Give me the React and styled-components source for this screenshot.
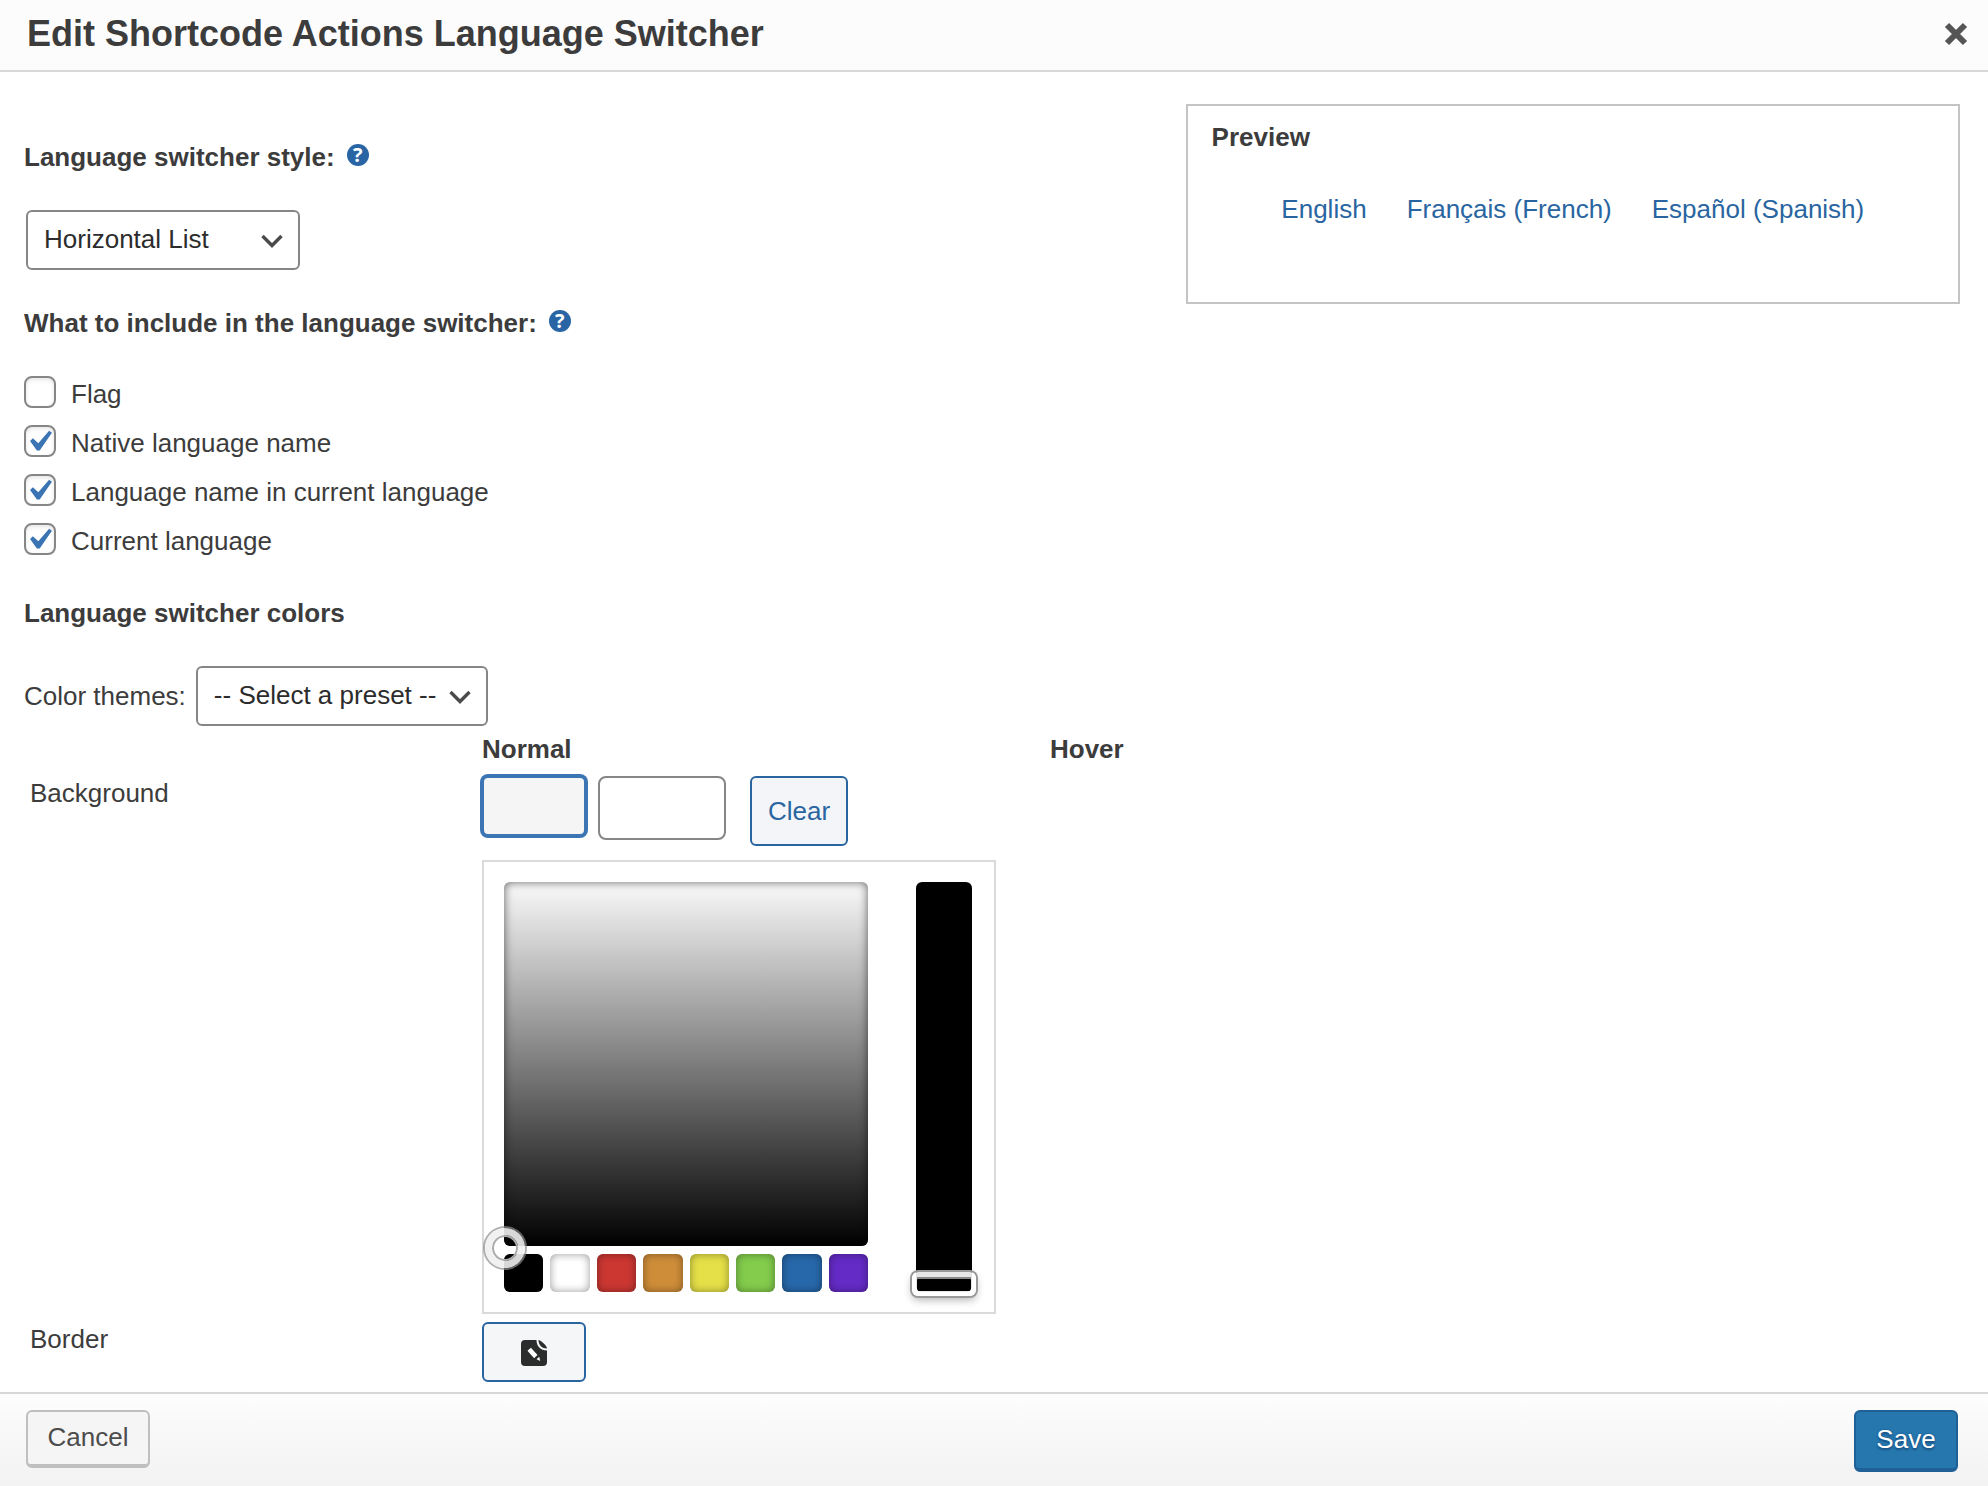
import React, { useState } from "react";
import styled, { createGlobalStyle } from "styled-components";

const includeOptions = [
  { id: "flag", label: "Flag", checked: false },
  { id: "native", label: "Native language name", checked: true },
  { id: "translated", label: "Language name in current language", checked: true },
  { id: "current", label: "Current language", checked: true },
];

const languages = ["English", "Français (French)", "Español (Spanish)"];

const palette = [
  { name: "Black", value: "#000000" },
  { name: "White", value: "#ffffff" },
  { name: "Red", value: "#cc3732" },
  { name: "Orange", value: "#ce8d39" },
  { name: "Yellow", value: "#e5e048" },
  { name: "Green", value: "#83cc4c" },
  { name: "Blue", value: "#2768aa" },
  { name: "Purple", value: "#642bc6" },
];

function SelectBox({ id, size, options }) {
  return (
    <SelectWrap $size={size}>
      <select id={id}>
        {options.map((option) => (
          <option key={option}>{option}</option>
        ))}
      </select>
      <svg width="22" height="14" viewBox="0 0 22 14" aria-hidden="true">
        <path d="M1.500 2l9.500 9.500L20.500 2" fill="none" stroke="#4b4b4b" strokeWidth="3.400" />
      </svg>
    </SelectWrap>
  );
}

function CheckOption({ id, label, initial }) {
  const [checked, setChecked] = useState(initial);
  return (
    <CheckRow>
      <CheckBox>
        <input
          id={id}
          type="checkbox"
          checked={checked}
          onChange={(e) => setChecked(e.target.checked)}
        />
        {checked && (
          <svg viewBox="2.9 2.1 15.2 15.2" aria-hidden="true">
            <path
              d="M14.83 4.89l1.34.94-5.81 8.38H9.02L5.78 9.67l1.34-1.25 2.57 2.4z"
              fill="#3a74b2"
            />
          </svg>
        )}
      </CheckBox>
      <label htmlFor={id}>{label}</label>
    </CheckRow>
  );
}

function ColorPicker() {
  const [saturation, setSaturation] = useState(0);
  return (
    <Picker>
      <PickerMain>
        <Shade>
          <ShadeHandle />
        </Shade>
        <Palette>
          {palette.map((color) => (
            <PaletteColor
              key={color.name}
              type="button"
              aria-label={color.name}
              $color={color.value}
            />
          ))}
        </Palette>
      </PickerMain>
      <Strip>
        <input
          type="range"
          aria-label="Saturation"
          min="0"
          max="100"
          value={saturation}
          onChange={(e) => setSaturation(Number(e.target.value))}
        />
      </Strip>
    </Picker>
  );
}

export default function App() {
  const [color, setColor] = useState("");

  return (
    <>
      <GlobalStyle />
      <Dialog>
        <Header>
          <h1>Edit Shortcode Actions Language Switcher</h1>
          <CloseButton type="button" aria-label="Close">
            <svg width="24" height="24" viewBox="0 0 24 24">
              <path
                d="M3 3l18 18M21 3L3 21"
                stroke="#555"
                strokeWidth="6"
              />
            </svg>
          </CloseButton>
        </Header>

        <Body>
          <Settings>
            <SectionTitle>
              <label htmlFor="switcher-style">Language switcher style:</label>
              <HelpButton type="button" aria-label="Help">?</HelpButton>
            </SectionTitle>
            <FieldIndent>
              <SelectBox
                id="switcher-style"
                size={274}
                options={["Horizontal List", "Vertical List", "Dropdown"]}
              />
            </FieldIndent>

            <SectionTitle>
              <span>What to include in the language switcher:</span>
              <HelpButton type="button" aria-label="Help">?</HelpButton>
            </SectionTitle>
            <CheckList>
              {includeOptions.map((option) => (
                <CheckOption
                  key={option.id}
                  id={option.id}
                  label={option.label}
                  initial={option.checked}
                />
              ))}
            </CheckList>

            <SectionTitle>Language switcher colors</SectionTitle>
            <ThemeRow>
              <label htmlFor="color-theme">Color themes:</label>
              <SelectBox
                id="color-theme"
                size={292}
                options={["-- Select a preset --", "Gray", "White", "Blue"]}
              />
            </ThemeRow>

            <ColorTable>
              <colgroup>
                <col className="name" />
                <col className="normal" />
                <col />
              </colgroup>
              <thead>
                <tr>
                  <td />
                  <th scope="col">Normal</th>
                  <th scope="col">Hover</th>
                </tr>
              </thead>
              <tbody>
                <tr>
                  <RowName scope="row">Background</RowName>
                  <td>
                    <ColorControls>
                      <SwatchButton type="button" aria-label="Select color" $active />
                      <ColorInput
                        type="text"
                        aria-label="Color value"
                        value={color}
                        onChange={(e) => setColor(e.target.value)}
                      />
                      <ClearButton type="button" onClick={() => setColor("")}>
                        Clear
                      </ClearButton>
                    </ColorControls>
                    <ColorPicker />
                  </td>
                  <td />
                </tr>
                <tr>
                  <RowName scope="row">Border</RowName>
                  <td>
                    <SwatchButton type="button" aria-label="Select border color">
                      <svg width="26" height="26" viewBox="0 0 26 26">
                        <path
                          d="M4 0h11.500c0 6 4 10.500 10.500 10.500V22a4 4 0 0 1-4 4H4a4 4 0 0 1-4-4V4a4 4 0 0 1 4-4z"
                          fill="#2b2d2d"
                        />
                        <path d="M17.500 0c2 0 8.500 5.500 8.500 8.500-5 0-8.500-3.500-8.500-8.500z" fill="#2b2d2d" />
                        <path d="M8.200 9.200l6.600 7.400" stroke="#fff" strokeWidth="4.600" />
                        <path d="M15.600 19.200l2.600-2.400 1 4.200z" fill="#fff" />
                      </svg>
                    </SwatchButton>
                  </td>
                  <td />
                </tr>
              </tbody>
            </ColorTable>
          </Settings>

          <Preview>
            <h2>Preview</h2>
            <ul>
              {languages.map((language) => (
                <li key={language}>
                  <a href="#">{language}</a>
                </li>
              ))}
            </ul>
          </Preview>
        </Body>

        <Footer>
          <CancelButton type="button">Cancel</CancelButton>
          <SaveButton type="button">Save</SaveButton>
        </Footer>
      </Dialog>
    </>
  );
}

const GlobalStyle = createGlobalStyle`
* {
  box-sizing: border-box;
}
body {
  margin: 0;
  background: #fff;
  color: #3c3c3c;
  font-family: "Liberation Sans", Arial, sans-serif;
  font-size: 26px;
  line-height: 30px;
}
button, input, select {
  font: inherit;
  color: inherit;
  margin: 0;
}
button, select, a {
  cursor: pointer;
}
svg {
  display: block;
}
`;

const Dialog = styled.div`
  display: flex;
  flex-direction: column;
  min-height: 100vh;
`;

const Header = styled.header`
  display: flex;
  align-items: center;
  justify-content: space-between;
  height: 72px;
  padding: 0 20px 2px 27px;
  background: #fcfcfc;
  border-bottom: 2px solid #d8d8d8;
  h1 {
    margin: 0;
    font-size: 36px;
    line-height: 40px;
  }
`;

const CloseButton = styled.button`
  padding: 0;
  border: 0;
  background: none;
`;

const Body = styled.main`
  display: grid;
  grid-template-columns: 3fr 2fr;
  align-items: start;
  flex: 1;
  padding: 32px 28px 9px 24px;
`;

const Settings = styled.section`
  padding-top: 38px;
`;

const SectionTitle = styled.div`
  display: flex;
  align-items: flex-start;
  gap: 12px;
  margin-bottom: 38px;
  font-weight: bold;
`;

const HelpButton = styled.button`
  width: 22px;
  height: 22px;
  margin-top: 2px;
  padding: 0;
  border: 0;
  border-radius: 50%;
  background: #2965a5;
  color: #fff;
  font-family: "Open Sans", sans-serif;
  font-size: 20px;
  font-weight: bold;
  line-height: 22px;
`;

const FieldIndent = styled.div`
  padding: 0 0 38px 2px;
`;

const SelectWrap = styled.div`
  display: grid;
  align-items: center;
  width: ${(props) => props.$size}px;
  select {
    grid-area: 1 / 1;
    height: 60px;
    padding: 0 44px 2px 16px;
    border: 2px solid #868686;
    border-radius: 6px;
    background: #fff;
    color: #2c2c2c;
    appearance: none;
  }
  svg {
    grid-area: 1 / 1;
    justify-self: end;
    margin: 2px 17px 0 0;
    pointer-events: none;
  }
`;

const CheckList = styled.div`
  display: flex;
  flex-direction: column;
  gap: 17px;
  margin-bottom: 43px;
`;

const CheckRow = styled.div`
  display: flex;
  align-items: center;
  gap: 15px;
  height: 32px;
  label {
    padding-top: 3px;
  }
`;

const CheckBox = styled.span`
  display: grid;
  width: 32px;
  height: 32px;
  input {
    grid-area: 1 / 1;
    border: 2px solid #868686;
    border-radius: 8px;
    background: #fff;
    box-shadow: inset 0 2px 4px rgba(0, 0, 0, 0.1);
    appearance: none;
  }
  svg {
    grid-area: 1 / 1;
    pointer-events: none;
  }
`;

const ThemeRow = styled.div`
  display: flex;
  align-items: center;
  gap: 10px;
  margin-bottom: 8px;
`;

const ColorTable = styled.table`
  width: 100%;
  table-layout: fixed;
  border-collapse: collapse;
  .name {
    width: 458px;
  }
  .normal {
    width: 568px;
  }
  th, td {
    padding: 0;
    text-align: left;
    vertical-align: top;
  }
  thead th {
    padding-bottom: 12px;
  }
`;

const RowName = styled.th`
  && {
    padding: 2px 0 0 6px;
    font-weight: normal;
  }
`;

const ColorControls = styled.div`
  display: flex;
  align-items: flex-start;
`;

const SwatchButton = styled.button`
  display: flex;
  align-items: center;
  justify-content: center;
  width: 104px;
  height: 60px;
  padding: 2px 0 0;
  border: 2px solid ${(props) => (props.$active ? "#3b75b3" : "#2965a0")};
  border-radius: 6px;
  background: ${(props) => (props.$active ? "#f5f5f5" : "#f4f6f7")};
  box-shadow: ${(props) => (props.$active ? "0 0 0 2px #3b75b3" : "none")};
`;

const ColorInput = styled.input`
  width: 128px;
  height: 64px;
  margin: 0 24px 0 12px;
  padding: 0 12px;
  border: 2px solid #868686;
  border-radius: 8px;
  background: #fff;
`;

const ClearButton = styled.button`
  width: 98px;
  height: 70px;
  padding: 0;
  border: 2px solid #2965a0;
  border-radius: 6px;
  background: #f4f5f8;
  color: #2965a0;
`;

const Picker = styled.div`
  display: flex;
  width: 514px;
  margin: 14px 0 8px;
  padding: 20px;
  border: 2px solid #dadada;
`;

const PickerMain = styled.div`
  width: 364px;
  margin-right: 48px;
`;

const Shade = styled.div`
  position: relative;
  height: 364px;
  border-radius: 6px;
  background: linear-gradient(#fafafa, #000);
  box-shadow: inset 0 0 10px rgba(0, 0, 0, 0.6);
`;

const ShadeHandle = styled.span`
  position: absolute;
  left: -19px;
  bottom: -22px;
  width: 40px;
  height: 40px;
  border: 7px solid rgba(240, 240, 240, 0.9);
  border-radius: 50%;
  box-shadow: 0 0 0 2px rgba(140, 140, 140, 0.7), inset 0 0 0 2px #aaa;
`;

const Palette = styled.div`
  display: grid;
  grid-template-columns: repeat(8, 1fr);
  gap: 7px;
  margin-top: 8px;
`;

const PaletteColor = styled.button`
  height: 38px;
  padding: 0;
  border: 0;
  border-radius: 6px;
  background: ${(props) => props.$color};
  box-shadow: inset 0 0 8px rgba(0, 0, 0, 0.4);
`;

const Strip = styled.div`
  position: relative;
  width: 56px;
  height: 410px;
  border-radius: 6px;
  background: #000;
  input {
    position: absolute;
    top: 0;
    left: -4px;
    width: 64px;
    height: 414px;
    margin: 0;
    background: none;
    appearance: none;
    writing-mode: vertical-lr;
    direction: rtl;
  }
  input::-webkit-slider-thumb {
    width: 64px;
    height: 24px;
    border: 5px solid rgba(255, 255, 255, 0.9);
    border-radius: 6px;
    background: none;
    box-shadow: 0 0 0 2px #999, inset 0 2px #888, 0 4px 8px rgba(0, 0, 0, 0.3);
    appearance: none;
  }
`;

const Preview = styled.aside`
  height: 200px;
  padding: 16px 24px;
  border: 2px solid #c4c4c4;
  h2 {
    margin: 0 0 42px;
    font-size: 26px;
    line-height: 30px;
  }
  ul {
    display: flex;
    justify-content: center;
    gap: 40px;
    margin: 0;
    padding: 0;
    list-style: none;
  }
  a {
    color: #2965a0;
    text-decoration: none;
  }
`;

const Footer = styled.footer`
  display: flex;
  align-items: flex-start;
  justify-content: space-between;
  height: 94px;
  padding: 16px 30px 0 26px;
  border-top: 2px solid #d8d8d8;
  background: linear-gradient(#fdfdfd, #f2f2f2);
`;

const CancelButton = styled.button`
  width: 124px;
  height: 58px;
  padding: 0 0 2px;
  border: 2px solid #bfbfbf;
  border-bottom-width: 4px;
  border-radius: 6px;
  background: #f5f5f5;
  color: #4c4c4c;
`;

const SaveButton = styled.button`
  width: 104px;
  height: 62px;
  padding: 0 0 2px;
  border: 2px solid #1f6097;
  border-bottom-width: 4px;
  border-radius: 6px;
  background: #2577ae;
  color: #fff;
  text-shadow: 0 2px 2px #1a5285, 0 0 2px #1a5285;
`;
